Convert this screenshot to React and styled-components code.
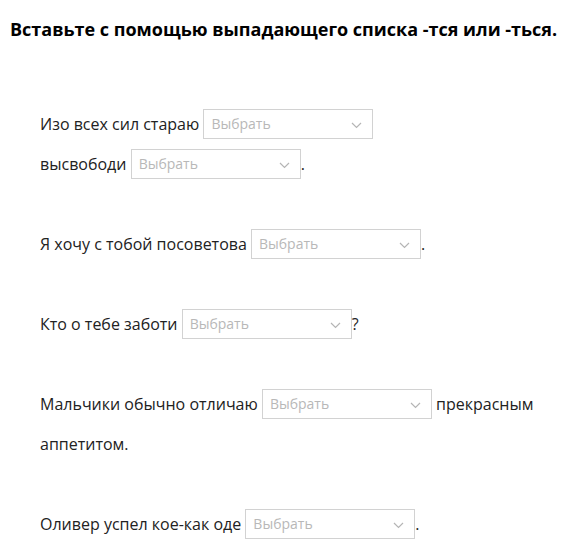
import React from 'react'
import styled, { createGlobalStyle } from 'styled-components'

const GlobalStyle = createGlobalStyle`
  body {
    margin: 0;
    background: #fff;
    font-family: "Open Sans", "Noto Sans", sans-serif;
  }
`

function Select() {
  return (
    <SelectBox>
      <span>Выбрать</span>
      <svg width="11" height="7" viewBox="0 0 11 7">
        <path d="M1 1 L5.5 5.5 L10 1" fill="none" stroke="#b5b5b5" strokeWidth="1.2" />
      </svg>
    </SelectBox>
  )
}

function App() {
  return (
    <Page>
      <GlobalStyle />
      <Title>Вставьте с помощью выпадающего списка -тся или -ться.</Title>
      <Task>
        <Para>
          Изо всех сил стараю <Select /> <NoWrap>высвободи <Select />.</NoWrap>
        </Para>
        <Para>
          Я хочу с тобой посоветова <Select />.
        </Para>
        <Para>
          Кто о тебе заботи <Select />?
        </Para>
        <Para>
          Мальчики обычно отличаю <Select /> прекрасным аппетитом.
        </Para>
        <Para>
          Оливер успел кое-как оде <Select />.
        </Para>
      </Task>
    </Page>
  )
}

const Page = styled.div`
  width: 562px;
  height: 550px;
  overflow: hidden;
`

const Title = styled.h1`
  margin: 0;
  padding: 17px 0 0 10px;
  font-size: 18px;
  font-weight: 700;
  line-height: 24px;
  color: #000;
  white-space: nowrap;
`

const Task = styled.div`
  width: 515px;
  padding: 63px 0 0 40px;
  display: flex;
  flex-direction: column;
  gap: 40px;
`

const Para = styled.p`
  margin: 0;
  font-size: 16px;
  line-height: 40px;
  color: #222;
`

const NoWrap = styled.span`
  white-space: nowrap;
`

const SelectBox = styled.span`
  display: inline-flex;
  align-items: center;
  justify-content: space-between;
  box-sizing: border-box;
  width: 170px;
  height: 30px;
  padding: 0 10px 0 7px;
  border: 1px solid #d2d2d2;
  vertical-align: middle;
  margin-top: -3px;
  font-size: 14px;
  line-height: 28px;
  color: #b8b8b8;
  background: #fff;

  svg {
    margin-top: 2px;
  }
`

export default App
